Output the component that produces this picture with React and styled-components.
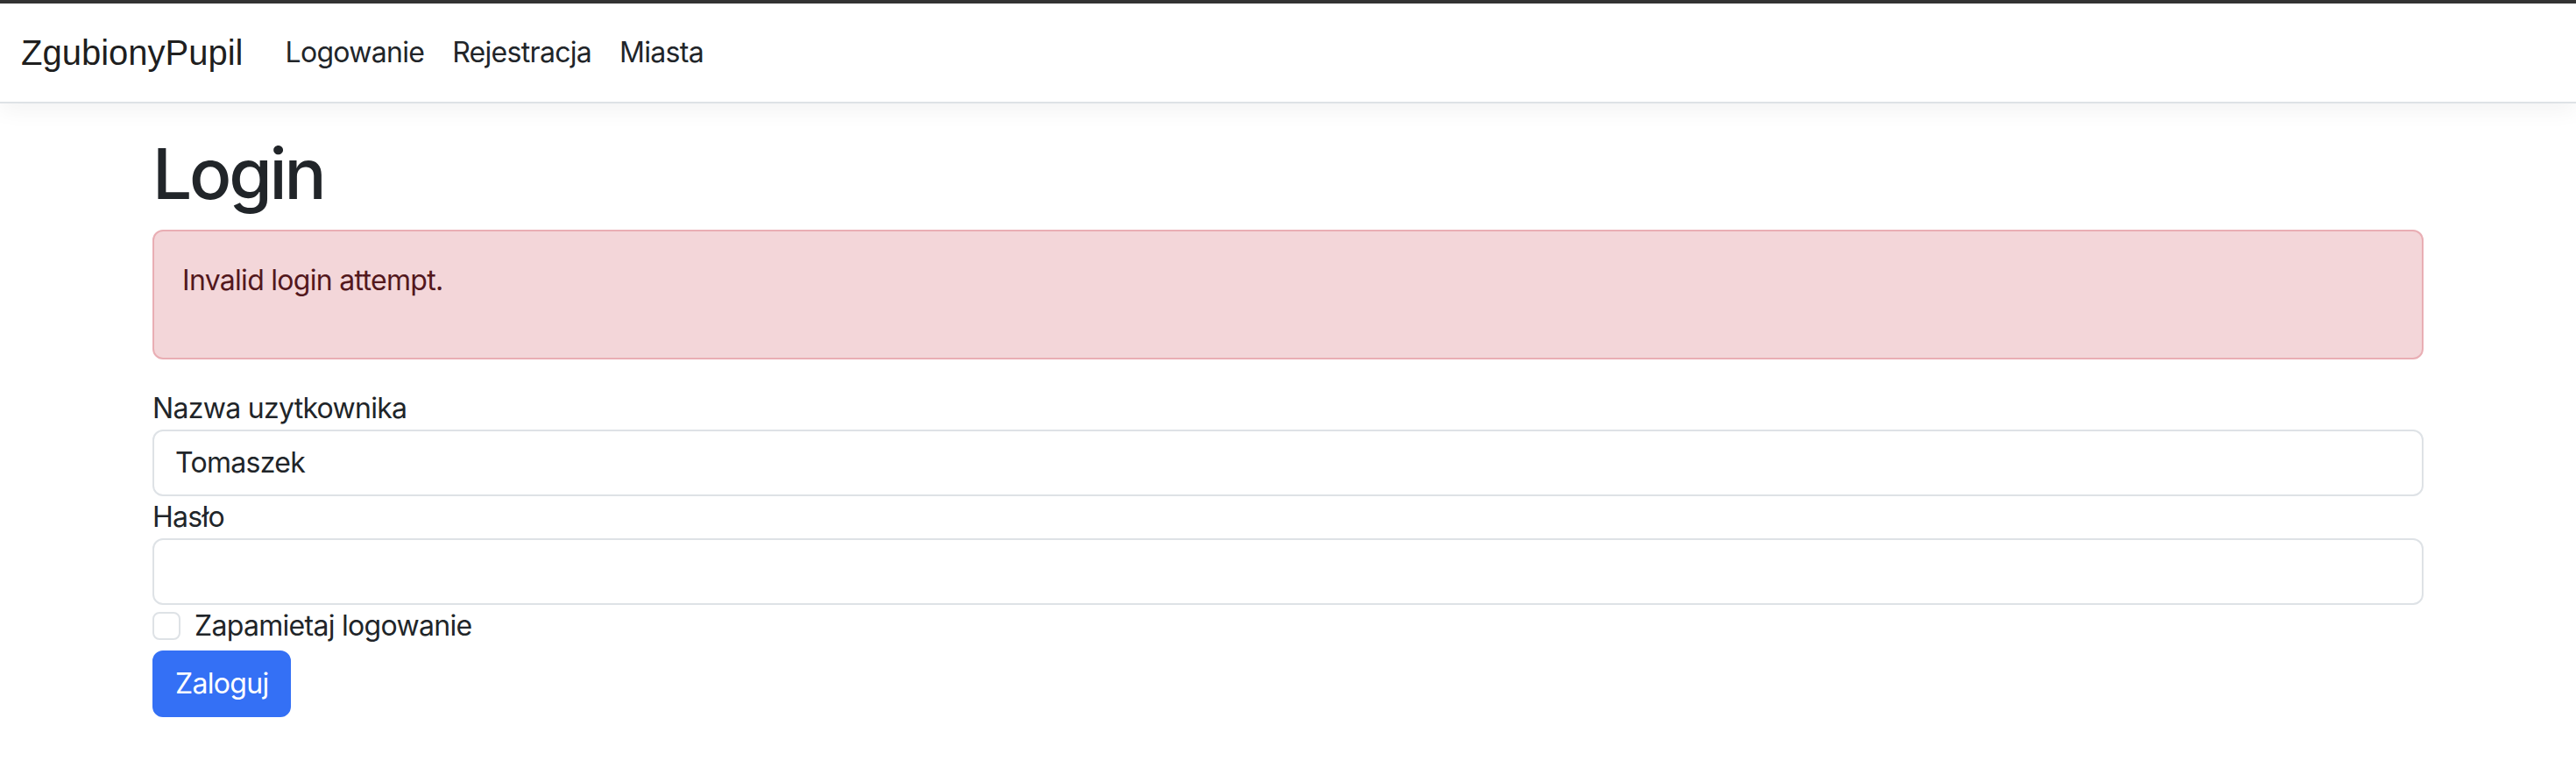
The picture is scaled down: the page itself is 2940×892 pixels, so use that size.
import React from "react";
import styled, { createGlobalStyle } from "styled-components";

const Global = createGlobalStyle`
  * { box-sizing: border-box; }
  html, body { margin: 0; padding: 0; background: #fff; }
  body {
    font-family: Inter, "Noto Sans", "Liberation Sans", sans-serif;
    font-size: 32px;
    line-height: 1.5;
    letter-spacing: -0.7px;
    color: #212529;
    border-top: 4px solid #333333;
  }
`;

const Navbar = styled.nav`
  display: flex;
  align-items: center;
  padding: 16px 24px;
  background: #fff;
  border-bottom: 2px solid #dee2e6;
  box-shadow: 0 8px 24px rgba(0, 0, 0, 0.05);
  margin-bottom: 32px;
`;

const Brand = styled.a`
  font-family: "Liberation Sans", Arial, sans-serif;
  font-size: 40px;
  line-height: 60px;
  letter-spacing: 0;
  padding: 10px 0;
  margin-right: 32px;
  color: rgba(0, 0, 0, 0.9);
  text-decoration: none;
`;

const NavList = styled.ul`
  display: flex;
  list-style: none;
  margin: 0;
  padding: 0;
`;

const NavLink = styled.a`
  display: block;
  padding: 16px;
  font-size: 32px;
  line-height: 48px;
  color: #212529;
  text-decoration: none;
`;

const Container = styled.main`
  max-width: 2640px;
  margin: 0 auto;
  padding: 0 24px;
`;

const Title = styled.h1`
  margin: 0 0 16px;
  font-size: 80px;
  font-weight: 500;
  line-height: 1.2;
  letter-spacing: -3.2px;
  color: #212529;
`;

const Alert = styled.div`
  padding: 32px;
  margin-bottom: 32px;
  border: 2px solid #e9aeb4;
  border-radius: 12px;
  background: #f3d6d9;
  color: #53181d;
`;

const ErrorList = styled.ul`
  list-style: none;
  margin: 0 0 32px;
  padding: 0;
`;

const Label = styled.label`
  display: inline-block;
`;

const Input = styled.input`
  display: block;
  width: 100%;
  padding: 12px 24px;
  font-family: inherit;
  font-size: 32px;
  line-height: 48px;
  letter-spacing: -0.7px;
  color: #212529;
  background: #fff;
  border: 2px solid #dee2e6;
  border-radius: 12px;
  outline: none;
`;

const Check = styled.div`
  display: block;
  min-height: 48px;
  padding-left: 48px;
  margin-bottom: 4px;
`;

const CheckBox = styled.input`
  float: left;
  appearance: none;
  width: 32px;
  height: 32px;
  margin: 8px 0 0 -48px;
  border: 2px solid #dee2e6;
  border-radius: 8px;
  background: #fff;
`;

const Button = styled.button`
  display: inline-block;
  padding: 12px 24px;
  font-family: inherit;
  font-size: 32px;
  line-height: 48px;
  letter-spacing: -0.7px;
  color: #fff;
  background: #3470f5;
  border: 2px solid #3470f5;
  border-radius: 12px;
  cursor: pointer;
`;

export default function App() {
  return (
    <>
      <Global />
      <Navbar>
        <Brand href="#">ZgubionyPupil</Brand>
        <NavList>
          <li><NavLink href="#">Logowanie</NavLink></li>
          <li><NavLink href="#">Rejestracja</NavLink></li>
          <li><NavLink href="#">Miasta</NavLink></li>
        </NavList>
      </Navbar>
      <Container>
        <Title>Login</Title>
        <form onSubmit={(e) => e.preventDefault()}>
          <Alert>
            <ErrorList>
              <li>Invalid login attempt.</li>
            </ErrorList>
          </Alert>
          <div>
            <Label htmlFor="user">Nazwa uzytkownika</Label>
            <Input id="user" type="text" defaultValue="Tomaszek" />
          </div>
          <div>
            <Label htmlFor="pass">Hasło</Label>
            <Input id="pass" type="password" />
          </div>
          <Check>
            <CheckBox id="remember" type="checkbox" />
            <Label htmlFor="remember">Zapamietaj logowanie</Label>
          </Check>
          <Button type="submit">Zaloguj</Button>
        </form>
      </Container>
    </>
  );
}
